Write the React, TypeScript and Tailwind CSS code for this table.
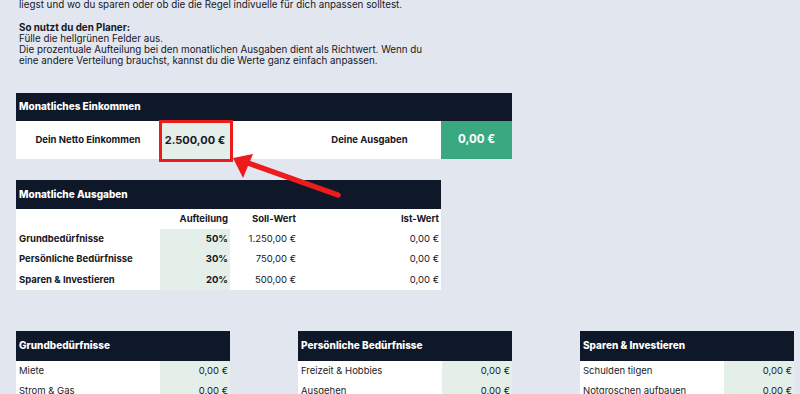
const navy = "bg-[#0f1829]";

function Header({ title, className = "" }: { title: string; className?: string }) {
  return (
    <div className={`${navy} flex items-center pl-[3px] text-[10px] font-extrabold text-white ${className}`}>
      {title}
    </div>
  );
}

function CategoryTable({ title, rows }: { title: string; rows: string[] }) {
  return (
    <div className="w-[214px] shrink-0">
      <Header title={title} className="h-[30px]" />
      {rows.map((r) => (
        <div key={r} className="grid h-[20px] grid-cols-[144px_70px] bg-white text-[9.5px] text-[#1b1b24]">
          <div className="flex items-center pl-[3px]">{r}</div>
          <div className="flex items-center justify-end bg-[#e4efea] pr-[2px]">0,00 €</div>
        </div>
      ))}
    </div>
  );
}

const split = [
  { name: "Grundbedürfnisse", pct: "50%", soll: "1.250,00 €" },
  { name: "Persönliche Bedürfnisse", pct: "30%", soll: "750,00 €" },
  { name: "Sparen & Investieren", pct: "20%", soll: "500,00 €" },
];

export default function App() {
  return (
    <div className="relative h-[394px] w-[800px] overflow-hidden bg-[#e2e6ef] pl-[16px] font-['Inter',sans-serif] text-[#17171f]">
      <div className="-mt-[1px] pl-[3px] text-[9.8px] leading-[11.3px]">
        <p>liegst und wo du sparen oder ob die die Regel indivuelle für dich anpassen solltest.</p>
        <p className="mt-[11.3px] font-bold">So nutzt du den Planer:</p>
        <p>Fülle die hellgrünen Felder aus.</p>
        <p>
          Die prozentuale Aufteilung bei den monatlichen Ausgaben dient als Richtwert. Wenn du
          <br />
          eine andere Verteilung brauchst, kannst du die Werte ganz einfach anpassen.
        </p>
      </div>

      <div className="mt-[26px] w-[496px]">
        <Header title="Monatliches Einkommen" className="h-[28px]" />
        <div className="grid h-[38px] grid-cols-[144px_70px_68px_143px_71px] bg-white text-[9.5px] font-bold">
          <div className="flex items-center justify-center">Dein Netto Einkommen</div>
          <div className="relative flex items-center justify-center bg-[#e4efea] text-[11px]">
            2.500,00 €
            <div className="absolute -left-[1px] -right-[3px] -top-[1px] -bottom-[3px] border-[3px] border-[#ec1c1c]" />
          </div>
          <div />
          <div className="flex items-center justify-center">Deine Ausgaben</div>
          <div className="flex items-center justify-center bg-[#3aa982] text-[11.5px] text-white">0,00 €</div>
        </div>
      </div>

      <div className="mt-[21px] w-[425px]">
        <Header title="Monatliche Ausgaben" className="h-[29px]" />
        <div className="bg-white text-[9.5px]">
          <div className="grid h-[20px] grid-cols-[144px_70px_68px_143px] font-bold">
            <div />
            <div className="flex items-center justify-end pr-[2px]">Aufteilung</div>
            <div className="flex items-center justify-end pr-[2px]">Soll-Wert</div>
            <div className="flex items-center justify-end pr-[2px]">Ist-Wert</div>
          </div>
          {split.map((s) => (
            <div key={s.name} className="grid h-[20.4px] grid-cols-[144px_70px_68px_143px]">
              <div className="flex items-center pl-[3px] font-bold">{s.name}</div>
              <div className="flex items-center justify-end bg-[#e4efea] pr-[2px] font-bold">{s.pct}</div>
              <div className="flex items-center justify-end pr-[2px]">{s.soll}</div>
              <div className="flex items-center justify-end pr-[2px]">0,00 €</div>
            </div>
          ))}
        </div>
      </div>

      <div className="mt-[41px] flex gap-[68px]">
        <CategoryTable title="Grundbedürfnisse" rows={["Miete", "Strom & Gas"]} />
        <CategoryTable title="Persönliche Bedürfnisse" rows={["Freizeit & Hobbies", "Ausgehen"]} />
        <CategoryTable title="Sparen & Investieren" rows={["Schulden tilgen", "Notgroschen aufbauen"]} />
      </div>

      <svg className="pointer-events-none absolute left-0 top-0" width="800" height="394" viewBox="0 0 800 394">
        <line x1="338" y1="195" x2="248" y2="163" stroke="#ec1c1c" strokeWidth="5.5" strokeLinecap="round" />
        <polygon points="233,158 253,154 243,178" fill="#ec1c1c" />
      </svg>
    </div>
  );
}
